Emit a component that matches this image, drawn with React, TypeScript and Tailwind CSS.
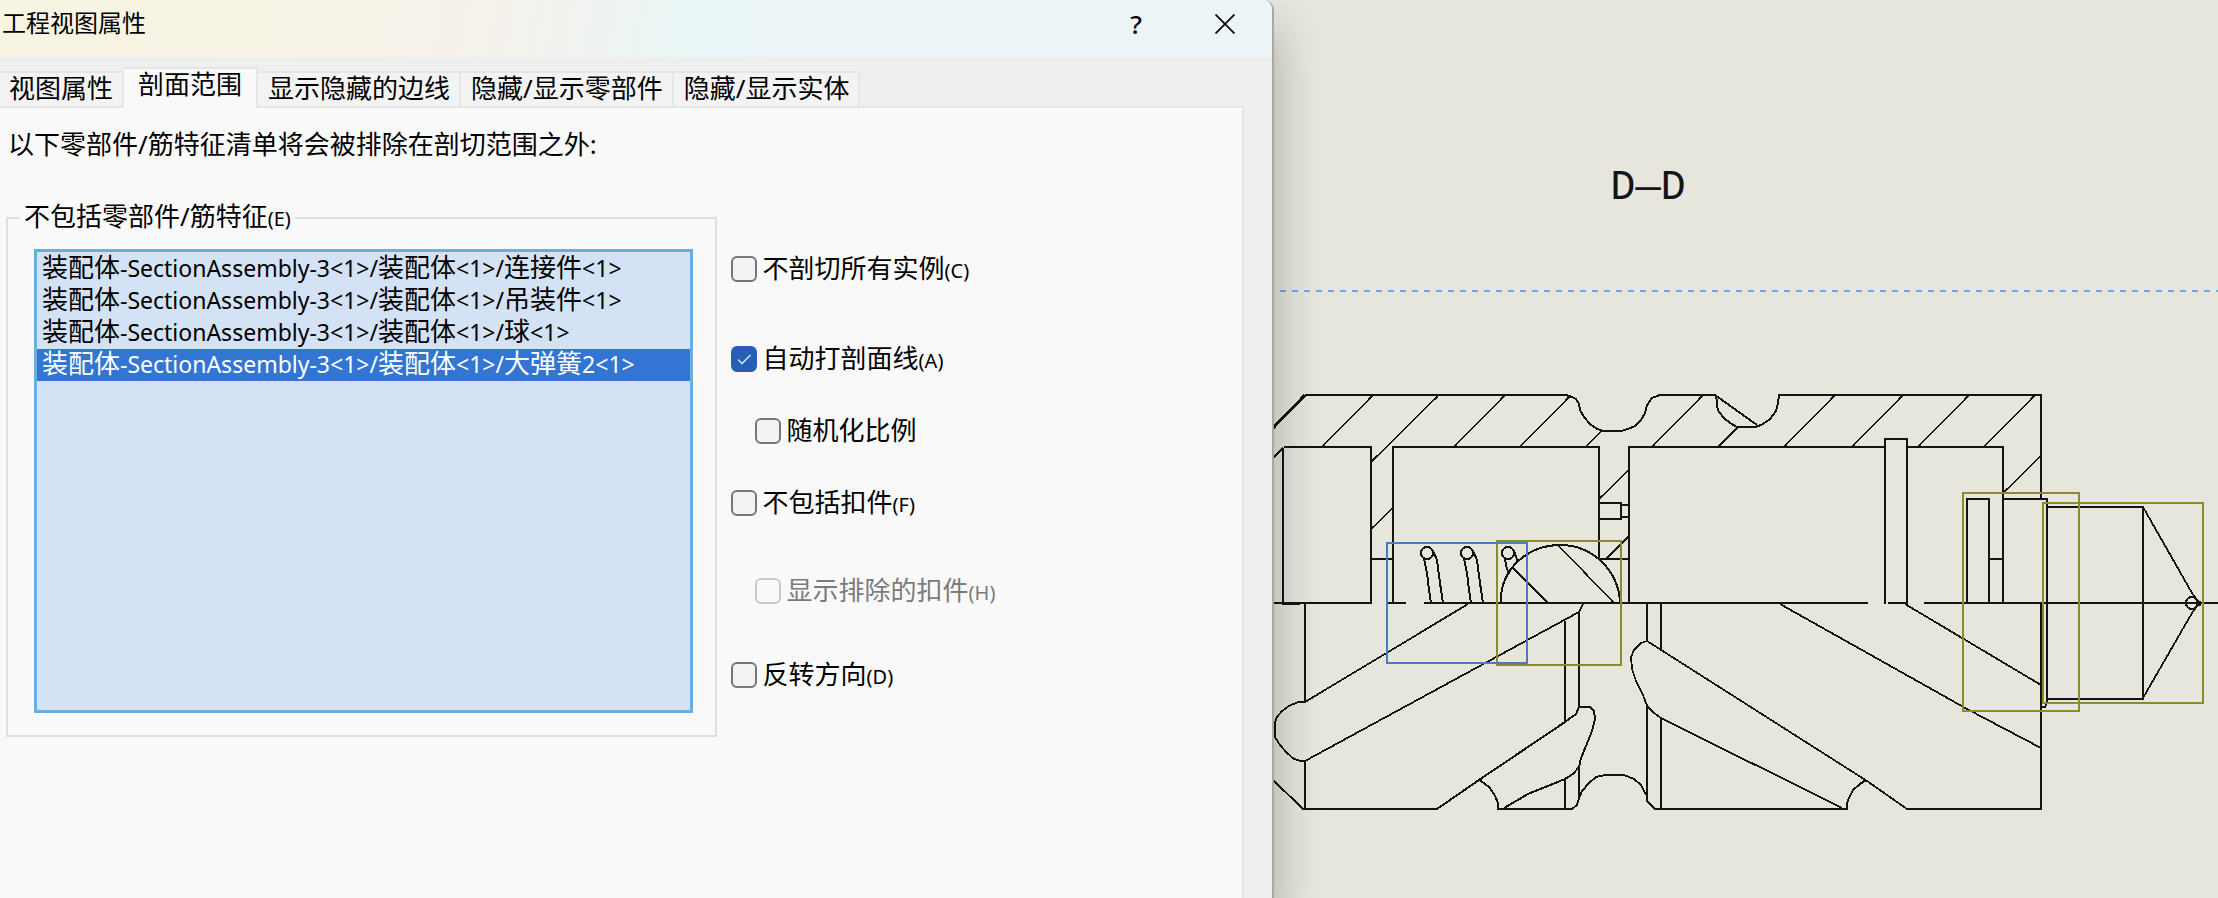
import { useState } from 'react'
import clsx from 'clsx'

const TABS = ['视图属性', '剖面范围', '显示隐藏的边线', '隐藏/显示零部件', '隐藏/显示实体']

const COMPONENTS = [
  '装配体-SectionAssembly-3<1>/装配体<1>/连接件<1>',
  '装配体-SectionAssembly-3<1>/装配体<1>/吊装件<1>',
  '装配体-SectionAssembly-3<1>/装配体<1>/球<1>',
  '装配体-SectionAssembly-3<1>/装配体<1>/大弹簧2<1>',
]

interface Option {
  id: string
  label: string
  hotkey?: string
  checked?: boolean
  disabled?: boolean
  className?: string
}

const OPTIONS: Option[] = [
  { id: 'no-cut', label: '不剖切所有实例', hotkey: 'C' },
  { id: 'auto-hatch', label: '自动打剖面线', hotkey: 'A', checked: true, className: 'mt-16' },
  { id: 'random-scale', label: '随机化比例', className: 'mt-[46px] ml-6' },
  { id: 'no-fasteners', label: '不包括扣件', hotkey: 'F', className: 'mt-[46px]' },
  { id: 'show-fasteners', label: '显示排除的扣件', hotkey: 'H', disabled: true, className: 'mt-[62px] ml-6' },
  { id: 'flip', label: '反转方向', hotkey: 'D', className: 'mt-[58px]' },
]

// Latin runs are set a little smaller than the Chinese ones
function MixedText({ text }: { text: string }) {
  return (
    <>
      {text.split(/([\x20-\x7e]+)/).map((run, i) =>
        i % 2 === 1 ? (
          <span key={i} className="text-[23px]">
            {run}
          </span>
        ) : (
          run
        ),
      )}
    </>
  )
}

function Hotkey({ letter }: { letter: string }) {
  return <span className="text-[20px]">({letter})</span>
}

function OptionCheckbox({ option }: { option: Option }) {
  const [checked, setChecked] = useState(option.checked ?? false)

  return (
    <div className={clsx('flex h-[26px] items-center gap-1.5', option.className)}>
      <span className="grid size-[26px] shrink-0 place-items-center">
        <input
          id={option.id}
          type="checkbox"
          checked={checked}
          disabled={option.disabled}
          onChange={(e) => setChecked(e.target.checked)}
          className="col-start-1 row-start-1 size-[26px] appearance-none rounded-md border-2 border-[#767676] bg-[#f3f3f3] checked:border-[#265fb5] checked:bg-[#265fb5] disabled:border-[#c9c9c9] disabled:bg-[#fafafa]"
        />
        {checked && (
          <svg viewBox="0 0 26 26" className="pointer-events-none col-start-1 row-start-1 size-[26px]">
            <path d="M7 13.5 L11 17.5 L19.5 9" fill="none" stroke="#cfdff5" strokeWidth="1.6" />
          </svg>
        )}
      </span>
      <label
        htmlFor={option.id}
        className={clsx('pb-0.5 whitespace-nowrap', option.disabled && 'text-[#7b7b7b]')}
      >
        {option.label}
        {option.hotkey && <Hotkey letter={option.hotkey} />}
      </label>
    </div>
  )
}

function TitleBar() {
  return (
    <header className="flex h-[57px] items-start justify-between bg-[linear-gradient(100deg,#f8f4e2_0%,#f7f3e6_24%,#f5f1eb_38%,#eff3f0_47%,#e9f6f6_54%,#ecf4f8_64%,#ecf4f8_100%)] pr-[26px] pl-0.5">
      <h1 className="pt-[11px] text-[24px] leading-6">工程视图属性</h1>
      <div className="flex items-center gap-[52px] pt-2">
        <button type="button" aria-label="帮助" className="size-8 text-[26px] leading-8 font-medium">
          ?
        </button>
        <button type="button" aria-label="关闭" className="grid h-8 w-[42px] place-items-center">
          <svg viewBox="0 0 20 20" className="size-5">
            <path d="M0.5 0.5 L19.5 19.5 M19.5 0.5 L0.5 19.5" stroke="#111" strokeWidth="1.9" />
          </svg>
        </button>
      </div>
    </header>
  )
}

function PropertiesDialog() {
  const [tab, setTab] = useState(1)
  const [selected, setSelected] = useState(3)

  return (
    <section className="z-10 flex flex-col overflow-hidden rounded-tr-[10px] border-r-2 border-[#a9a9a3] bg-[#efefef] shadow-[0_30px_48px_rgba(0,0,0,0.28)]">
      <TitleBar />

      <div role="tablist" className="flex items-end pt-2.5">
        {TABS.map((name, i) => (
          <button
            key={name}
            type="button"
            role="tab"
            aria-selected={tab === i}
            onClick={() => setTab(i)}
            className={clsx(
              'border-t-2 border-r-2 border-[#e5e5e5] leading-[26px] whitespace-nowrap',
              tab === i
                ? 'relative -mb-0.5 h-[41px] bg-[#f9f9f9] px-[14px] pb-2.5'
                : 'h-[35px] bg-[#f3f3f3] pr-[9px] pb-1 first:pl-[9px] pl-[10px]',
            )}
          >
            {name}
          </button>
        ))}
      </div>

      <div role="tabpanel" className="mr-7 flex-1 border-t-2 border-r-2 border-[#e5e5e5] bg-[#f9f9f9]">
        <p className="pt-[23px] pl-2 leading-[26px]">以下零部件/筋特征清单将会被排除在剖切范围之外:</p>

        <div className="grid grid-cols-[710fr_511fr] gap-[14px] pt-[46px] pl-1.5">
          <fieldset className="h-[534px] border-2 border-[#dfdfdf] pr-[22px] pl-[26px]">
            <legend className="-ml-3.5 pr-1 pl-1 leading-[26px]">
              不包括零部件/筋特征
              <Hotkey letter="E" />
            </legend>
            <ul
              role="listbox"
              aria-label="不包括零部件/筋特征"
              className="mt-[17px] h-[464px] border-[3px] border-[#6aaede] bg-[#d3e2f5] pt-px"
            >
              {COMPONENTS.map((name, i) => (
                <li
                  key={name}
                  role="option"
                  aria-selected={selected === i}
                  onClick={() => setSelected(i)}
                  className={clsx(
                    'h-8 pl-[5px] leading-7 whitespace-nowrap',
                    selected === i && 'bg-[#3275d2] text-white',
                  )}
                >
                  <MixedText text={name} />
                </li>
              ))}
            </ul>
          </fieldset>

          <div className="flex flex-col pt-[53px]">
            {OPTIONS.map((option) => (
              <OptionCheckbox key={option.id} option={option} />
            ))}
          </div>
        </div>
      </div>
    </section>
  )
}

const HATCHES =
  'M1272 459 L1283 448 M1322 447 L1372 396 M1371 462 L1438 396 M1454 447 L1504 396 M1520 447 L1569 397 M1586 447 L1602 430 ' +
  'M1652 447 L1702 396 M1718 447 L1738 427 M1784 447 L1834 396 M1852 447 L1902 396 M1918 447 L1968 396 M1984 447 L2034 396 ' +
  'M2004 492 L2041 456 M1372 528 L1393 508 M1600 498 L1629 470 M1606 559 L1629 536'

const UPPER_OUTLINE =
  'M1305 395 H1566 L1572 397 L1576 399 L1579 404 L1580 410 L1584 417 L1590 424 L1597 429 L1604 431 H1621 L1628 429 L1635 426 L1641 420 ' +
  'L1645 413 L1647 405 L1652 398 L1657 396 L1660 395 H1715 L1717 400 L1717 407 L1719 412 L1724 418 L1730 423 L1737 427 H1756 ' +
  'L1763 424 L1770 419 L1776 411 L1778 403 L1779 395 H2041 V499 M1715 395 L1757 425'

const CAVITIES =
  'M1283 449 V604 H1300 M1284 447 H1371 V603 M1393 603 V447 H1599 V559 H1629 M1371 559 H1393 ' +
  'M1629 603 V447 H1885 M1885 604 V439 H1907 V604 M1907 447 H2003 V603 ' +
  'M1600 503 H1621 V519 H1600 M1621 505 H1629 M1621 517 H1629 ' +
  'M1967 603 V499 H1989 V603 M1989 559 H2003 M2003 499 H2047 V703 L2045 707 H2041'

const CENTRE_LINE = 'M1272 603 H1372 M1388 603 H1406 M1424 603 H1868 M1888 603 H1907 M1924 603 H2218'

const LOWER_VERTICALS =
  'M1305 603 V702 M1305 761 V809 M1565 621 V722 M1565 779 V809 M1579 612 V707 M1579 768 V800 ' +
  'M1647 603 V641 M1647 705 V801 M1661 603 V649 M1661 718 V809 M2041 603 V810'

const LOWER_OUTLINE =
  'M1272 779 L1303 809 H1437 L1479 780 L1565 722 L1576 714 L1579 707 H1590 L1594 711 L1595 719 L1592 731 L1586 746 L1581 758 L1579 767 ' +
  'L1573 774 L1565 779 L1528 794 L1504 808 M1479 780 L1484 783 L1490 788 L1495 796 L1498 803 V809 H1572 L1577 805 L1579 798 L1582 791 ' +
  'L1589 783 L1596 777 L1605 775 H1624 L1634 779 L1641 785 L1644 791 L1647 796 V801 L1655 809 H1847 V803 L1849 798 L1853 790 L1860 784 L1866 780 ' +
  'M1907 809 H2041'

const GROOVES =
  'M1468 604 L1305 702 H1298 L1289 706 L1282 711 L1277 717 L1275 722 V737 L1280 745 L1287 753 L1294 759 L1301 761 H1305 L1579 612 L1583 604 ' +
  'M1780 604 L1967 709 L2041 748 M1905 604 L2041 685 ' +
  'M1907 809 L1867 781 L1647 641 L1641 643 L1634 650 L1631 657 L1632 669 L1636 681 L1643 695 L1646 703 L1648 707 L1654 713 L1661 718 L1842 808'

const SPRING_COILS = [1427, 1467]

function SectionDrawing() {
  return (
    <svg
      viewBox="1274 0 944 898"
      role="img"
      aria-label="D—D"
      className="w-full [shape-rendering:crispEdges]"
      fill="none"
      stroke="#141414"
      strokeWidth="2"
    >
      <text
        x="1648"
        y="199"
        textAnchor="middle"
        fill="#141414"
        stroke="none"
        className="font-['Liberation_Mono',monospace] text-[42px]"
      >
        D—D
      </text>

      <path d="M1268 291 H2218" stroke="#6aa8f8" strokeDasharray="6 6" />

      <path d="M1272 429 L1305 395" strokeWidth="3" />
      <path d={UPPER_OUTLINE} />
      <path d={CAVITIES} />
      <path d={HATCHES} strokeWidth="1.5" />
      <path d={CENTRE_LINE} />
      <path d={LOWER_VERTICALS} />
      <path d={LOWER_OUTLINE} />
      <path d={GROOVES} strokeWidth="1.8" />

      {/* spring */}
      {SPRING_COILS.map((x) => (
        <g key={x}>
          <circle cx={x} cy="553" r="6" />
          <path
            d={`M${x - 3} 559 L${x} 573 L${x + 2} 590 L${x + 4} 603 M${x + 6} 551 L${x + 10} 560 L${x + 13} 583 L${x + 16} 603`}
          />
        </g>
      ))}
      <circle cx="1508" cy="553" r="6" />
      <path d="M1505 559 L1507 569 L1509 574 M1514 551 L1518 562" />

      {/* ball */}
      <path d="M1501 603 V597 A59 55 0 0 1 1560 545 A60 60 0 0 1 1620 603" />
      <path d="M1513 568 L1548 603 M1558 545 L1614 603" strokeWidth="1.5" />

      {/* nose cone */}
      <path d="M2047 507 H2143 V699 H2047" />
      <path d="M2143 507 L2192 593 L2199 603 L2192 613 L2143 698" strokeWidth="1.8" />
      <circle cx="2192" cy="603" r="6" />
      <path d="M2196 603 H2201" strokeWidth="5" />

      <rect x="1497" y="541" width="124" height="124" stroke="#8b8b2b" />
      <rect x="1387" y="543" width="140" height="120" stroke="#4b7cba" />
      <rect x="1963" y="493" width="116" height="218" stroke="#8b8b2b" />
      <rect x="2043" y="503" width="160" height="200" stroke="#8b8b2b" />
    </svg>
  )
}

export default function App() {
  return (
    <main className="grid min-h-screen grid-cols-[1274fr_944fr] overflow-hidden bg-[#e6e6dd] font-['Noto_Sans','Noto_Sans_CJK_SC',sans-serif] text-[26px] text-black">
      <PropertiesDialog />
      <SectionDrawing />
    </main>
  )
}
